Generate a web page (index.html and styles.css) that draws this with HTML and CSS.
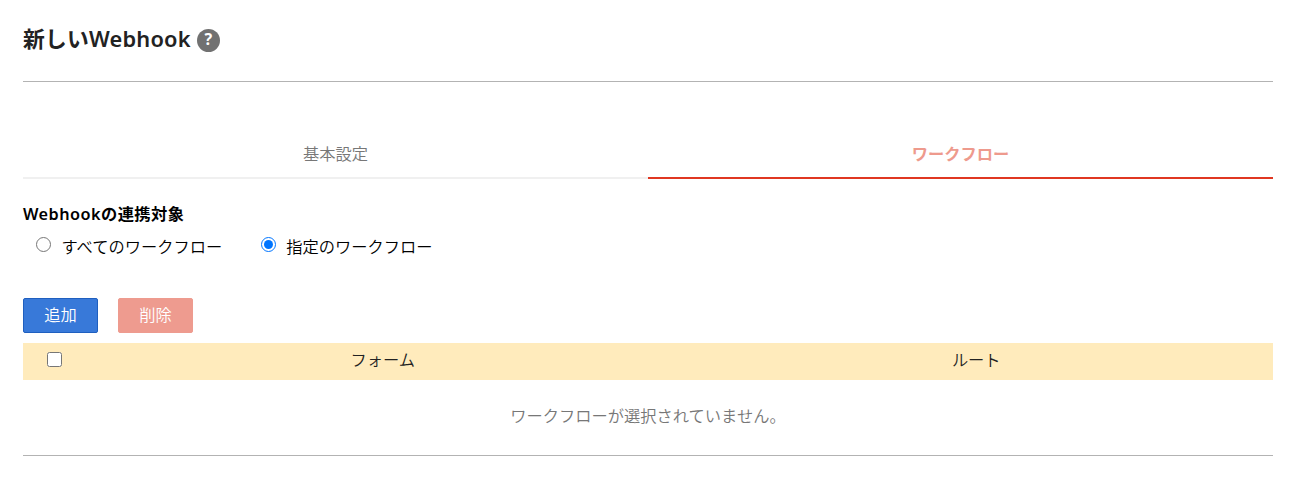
FILE: index.html
```html
<!DOCTYPE html>
<html lang="ja">
<head>
    <meta charset="UTF-8">
    <meta name="viewport" content="width=device-width, initial-scale=1.0">
    <title>新しいWebhook</title>
    <link rel="stylesheet" href="styles.css">
</head>
<body>

<header class="page-header">
    <h1 class="page-title">新しいWebhook</h1>
    <span class="help-icon">?</span>
</header>

<nav class="tabs">
    <a class="tab">基本設定</a>
    <a class="tab active">ワークフロー</a>
</nav>

<h2 class="section-title">Webhookの連携対象</h2>
<div class="radio-group">
    <label class="radio"><input type="radio" name="target"><span>すべてのワークフロー</span></label>
    <label class="radio"><input type="radio" name="target" checked><span>指定のワークフロー</span></label>
</div>

<div class="buttons">
    <button class="button button-add">追加</button>
    <button class="button button-delete" disabled>削除</button>
</div>

<div class="table">
    <div class="table-head">
        <div class="cell-check"><input type="checkbox"></div>
        <div class="cell">フォーム</div>
        <div class="cell">ルート</div>
    </div>
    <p class="empty">ワークフローが選択されていません。</p>
</div>

</body>
</html>
```

FILE: styles.css
```css
* {
    box-sizing: border-box;
}

body {
    margin: 0;
    padding: 0 29px 0 23px;
    font-family: "Noto Sans", "Noto Sans CJK JP", sans-serif;
    font-size: 16.25px;
    font-weight: 350;
    line-height: 24px;
    color: #000;
    background: #fff;
}

/* Header */
.page-header {
    display: flex;
    align-items: center;
    gap: 6px;
    height: 82px;
    border-bottom: 1px solid #b3b3b3;
}

.page-title {
    margin: 0;
    padding-bottom: 4px;
    font-size: 21.8px;
    font-weight: 600;
    line-height: 32px;
    letter-spacing: 0.2px;
    color: #222;
}

.help-icon {
    width: 23px;
    height: 23px;
    border-radius: 50%;
    background: #717171;
    color: #fff;
    font-size: 16px;
    font-weight: bold;
    line-height: 20px;
    text-align: center;
}

/* Tabs */
.tabs {
    display: flex;
    margin-top: 48px;
}

.tab {
    flex: 1;
    height: 49px;
    padding-top: 12px;
    border-bottom: 2px solid #f0f0f0;
    color: #777;
    text-align: center;
}

.tab.active {
    border-color: #e03721;
    color: #ee9a8d;
    font-weight: bold;
}

.section-title {
    margin: 23px 0 0;
    font-size: 16.25px;
    font-weight: 600;
    line-height: 24px;
    letter-spacing: 0.45px;
}

.radio-group {
    display: flex;
    gap: 38.5px;
    padding: 9px 0 0 13px;
}

.radio {
    display: flex;
}

.radio input {
    width: 15px;
    height: 15px;
    margin: 2px 10.5px 0 0;
}

/* Buttons */
.buttons {
    display: flex;
    gap: 20px;
    margin-top: 39px;
}

.button {
    width: 75px;
    height: 35px;
    padding: 0 0 2px;
    border: 1px solid #1f5fbf;
    border-radius: 2px;
    background: #3879d9;
    color: #fff;
    font: inherit;
}

.button-delete {
    border-color: #ee9b8f;
    background: #ee9b8f;
}

/* Table */
.table {
    margin-top: 10px;
    border-bottom: 1px solid #b3b3b3;
}

.table-head {
    display: flex;
    height: 37px;
    padding-top: 5px;
    background: #ffebbc;
    color: #222;
    text-align: center;
}

.cell-check {
    width: 63px;
}

.cell-check input {
    display: block;
    width: 15px;
    height: 15px;
    margin: 4px auto 0;
}

.cell {
    flex: 1;
}

.empty {
    margin: 0;
    padding: 24px 0 27px;
    color: #777;
    text-align: center;
}
```
